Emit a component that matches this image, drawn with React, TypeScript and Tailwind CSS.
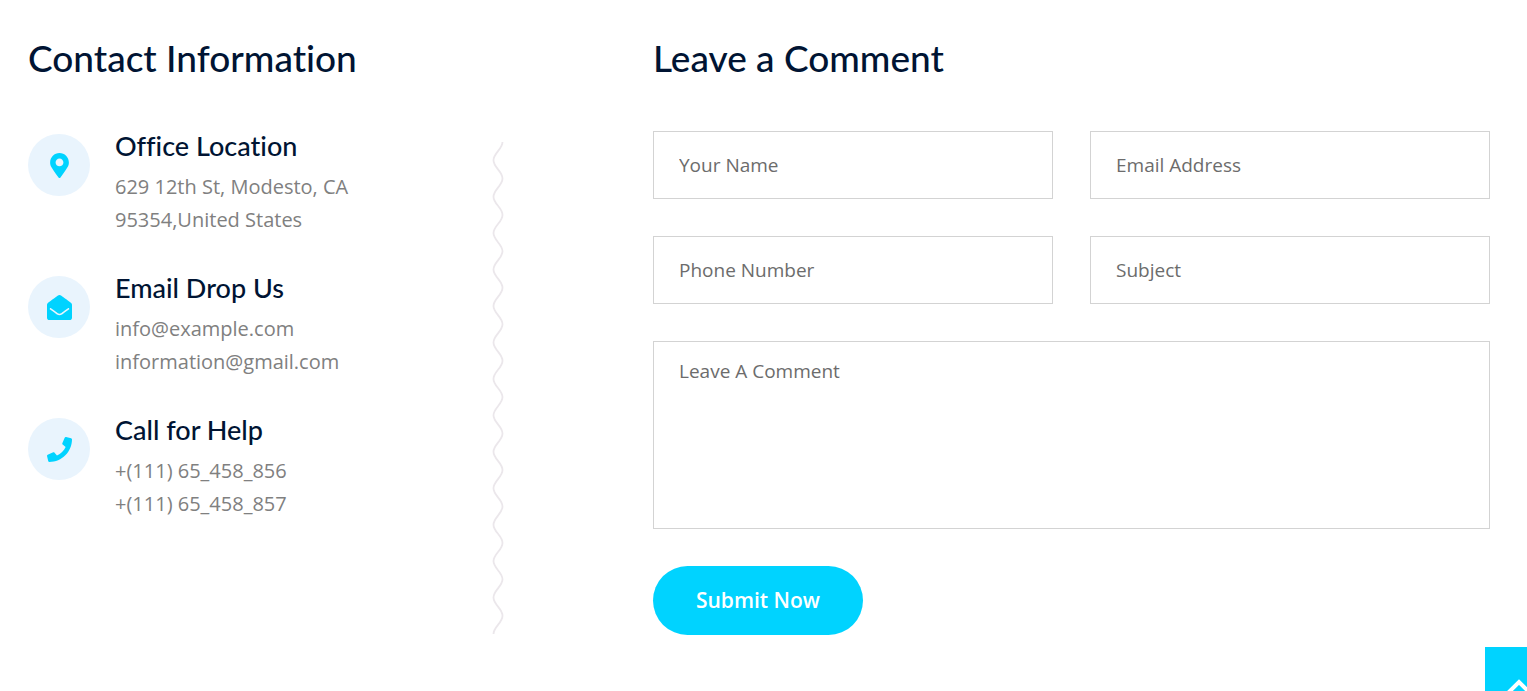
import type { ReactNode } from "react";
import { FaEnvelopeOpen, FaMapMarkerAlt, FaPhone } from "react-icons/fa";

type ContactItem = { title: string; lines: string[]; icon: ReactNode };

const contacts: ContactItem[] = [
  {
    title: "Office Location",
    lines: ["629 12th St, Modesto, CA", "95354,United States"],
    icon: <FaMapMarkerAlt className="size-[25px]" />,
  },
  {
    title: "Email Drop Us",
    lines: ["info@example.com", "information@gmail.com"],
    icon: <FaEnvelopeOpen className="size-[25px]" />,
  },
  {
    title: "Call for Help",
    lines: ["+(111) 65_458_856", "+(111) 65_458_857"],
    icon: <FaPhone className="size-[25px]" />,
  },
];

const fields = [
  { id: "name", label: "Your Name", type: "text" },
  { id: "email", label: "Email Address", type: "email" },
  { id: "phone", label: "Phone Number", type: "tel" },
  { id: "subject", label: "Subject", type: "text" },
];

const HALF_WAVE = 18;
const HALF_WAVES = 27;

function wavePath() {
  let d = "M10.5 0";
  for (let i = 0; i < HALF_WAVES; i++) {
    const from = i % 2 === 0 ? 10.5 : 1.5;
    const to = i % 2 === 0 ? 1.5 : 10.5;
    const y = i * HALF_WAVE;
    d += `C${from} ${y + 7} ${to} ${y + 11} ${to} ${y + HALF_WAVE}`;
  }
  return d;
}

function WavyDivider() {
  return (
    <svg
      className="mt-3 h-[492px] w-3 shrink-0"
      viewBox={`0 0 12 ${HALF_WAVE * HALF_WAVES}`}
      preserveAspectRatio="none"
      fill="none"
      aria-hidden="true"
    >
      <path d={wavePath()} stroke="#ebe7eb" strokeWidth="1.8" />
    </svg>
  );
}

function Heading({ children }: { children: ReactNode }) {
  return (
    <h2 className="font-['Lato',sans-serif] text-[37px] leading-[44px] font-medium text-[#001433] [font-variant-ligatures:none]">
      {children}
    </h2>
  );
}

export default function App() {
  return (
    <main className="bg-white pt-9 pr-[37px] pb-14 pl-7 font-['Open_Sans',sans-serif]">
      <div className="grid grid-cols-[476px_minmax(0,1fr)] gap-x-[149px]">
        <section>
          <Heading>Contact Information</Heading>
          <div className="mt-[50px] flex justify-between">
            <ul className="flex flex-col gap-9">
              {contacts.map((item) => (
                <li key={item.title} className="flex gap-[25px]">
                  <span className="mt-1 flex size-[62px] shrink-0 items-center justify-center rounded-full bg-[#e9f4fd] text-[#00d3ff]">
                    {item.icon}
                  </span>
                  <div>
                    <h3 className="mb-2 font-['Lato',sans-serif] text-[27px] leading-8 font-medium text-[#001433] [font-variant-ligatures:none]">
                      {item.title}
                    </h3>
                    {item.lines.map((line) => (
                      <p key={line} className="text-xl leading-[33px] text-[#808080]">
                        {line}
                      </p>
                    ))}
                  </div>
                </li>
              ))}
            </ul>
            <WavyDivider />
          </div>
        </section>

        <section>
          <Heading>Leave a Comment</Heading>
          <form
            className="mt-[51px] grid grid-cols-2 gap-[37px]"
            onSubmit={(event) => event.preventDefault()}
          >
            {fields.map((field) => (
              <input
                key={field.id}
                id={field.id}
                name={field.id}
                type={field.type}
                aria-label={field.label}
                placeholder={field.label}
                className="h-[68px] w-full border border-[#d3d3d3] px-[25px] text-[19px] text-[#333333] outline-none placeholder:text-[#6c6c6c]"
              />
            ))}
            <textarea
              id="comment"
              name="comment"
              aria-label="Leave A Comment"
              placeholder="Leave A Comment"
              className="col-span-2 block h-[188px] w-full resize-none border border-[#d3d3d3] px-[25px] py-[15px] text-[19px] leading-7 text-[#333333] outline-none placeholder:text-[#6c6c6c]"
            />
            <button
              type="submit"
              className="h-[69px] w-[210px] rounded-full bg-[#00d3ff] text-[21px] font-semibold text-white"
            >
              Submit Now
            </button>
          </form>
        </section>
      </div>

      <a
        href="#top"
        aria-label="Back to top"
        className="fixed -right-[26px] -bottom-[24px] flex size-[68px] items-end justify-center bg-[#00d3ff] pb-5"
      >
        <svg
          className="h-4 w-7"
          viewBox="0 0 28 16"
          fill="none"
          stroke="#ffffff"
          strokeWidth="4"
          aria-hidden="true"
        >
          <path d="M2 15L14 3L26 15" />
        </svg>
      </a>
    </main>
  );
}
